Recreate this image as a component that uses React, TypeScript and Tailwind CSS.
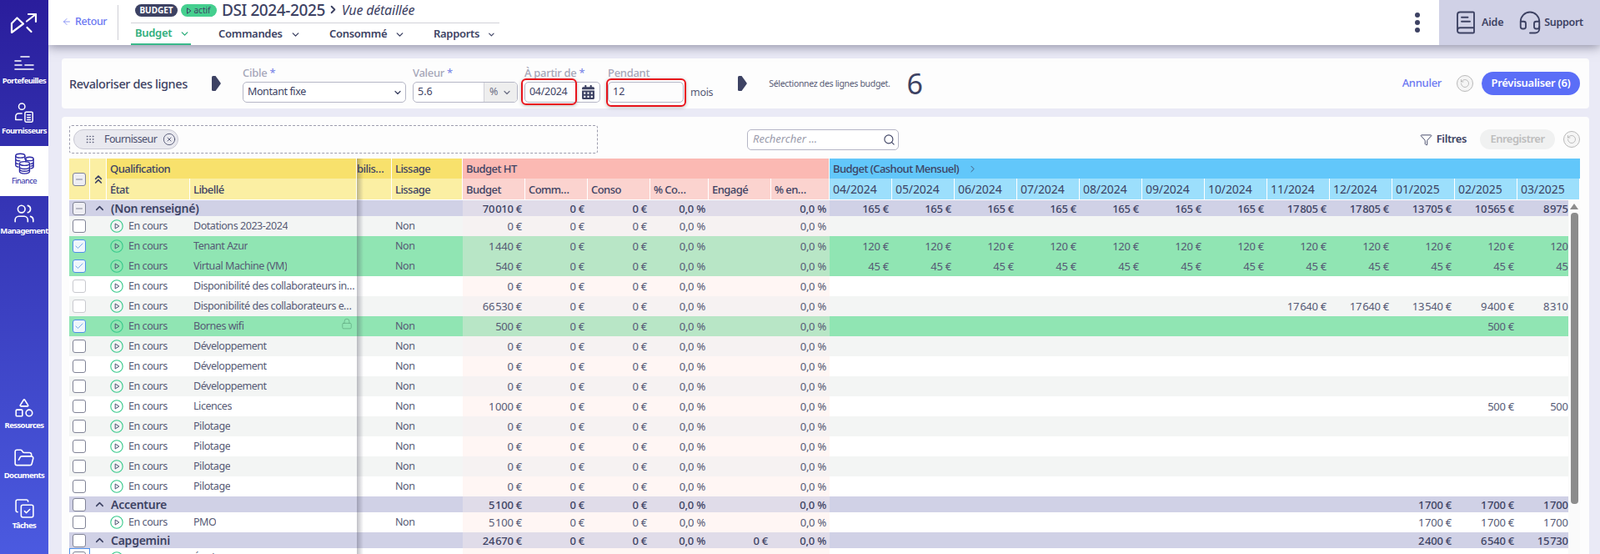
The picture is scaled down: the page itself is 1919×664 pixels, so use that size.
import React from "react";
import {
  ArrowLeft, ChevronDown, ChevronRight, ChevronUp, ChevronsUp, CircleX, Check, CopyCheck, Filter, FolderOpen, Grip, Headset, Lock, Minus, RotateCcw, Search, Shapes, Users, BookText,
} from "lucide-react";
import { FaCalendarAlt } from "react-icons/fa";

const GRID = "grid grid-cols-[25px_20px_100px_200px_42px_85px_75px_75px_75px_70px_75px_70px_repeat(12,75px)] w-[1812px]";
const n = "\u200a";

type Kind = "group" | "grey" | "white" | "green";
type Row = {
  kind: Kind;
  label: string;
  lissage?: string;
  budget: string;
  engage?: string;
  months?: Record<number, string>;
  check?: "none" | "checked" | "minus" | "disabled";
  lock?: boolean;
};

const all = (v: string) => Object.fromEntries(Array.from({ length: 12 }, (_, i) => [i, v]));

const rows: Row[] = [
  {
    kind: "group", label: "(Non renseigné)", budget: `70${n}010 €`, check: "minus",
    months: { 0: "165 €", 1: "165 €", 2: "165 €", 3: "165 €", 4: "165 €", 5: "165 €", 6: "165 €", 7: `17${n}805 €`, 8: `17${n}805 €`, 9: `13${n}705 €`, 10: `10${n}565 €`, 11: `8${n}975 €` },
  },
  { kind: "grey", label: "Dotations 2023-2024", lissage: "Non", budget: "0 €" },
  { kind: "green", label: "Tenant Azur", lissage: "Non", budget: `1${n}440 €`, check: "checked", months: all("120 €") },
  { kind: "green", label: "Virtual Machine (VM)", lissage: "Non", budget: "540 €", check: "checked", months: all("45 €") },
  { kind: "white", label: "Disponibilité des collaborateurs internes", budget: "0 €", check: "disabled" },
  {
    kind: "grey", label: "Disponibilité des collaborateurs externes", budget: `66${n}530 €`, check: "disabled",
    months: { 7: `17${n}640 €`, 8: `17${n}640 €`, 9: `13${n}540 €`, 10: `9${n}400 €`, 11: `8${n}310 €` },
  },
  { kind: "green", label: "Bornes wifi", lissage: "Non", budget: "500 €", check: "checked", lock: true, months: { 10: "500 €" } },
  { kind: "grey", label: "Développement", lissage: "Non", budget: "0 €" },
  { kind: "white", label: "Développement", lissage: "Non", budget: "0 €" },
  { kind: "grey", label: "Développement", lissage: "Non", budget: "0 €" },
  { kind: "white", label: "Licences", lissage: "Non", budget: `1${n}000 €`, months: { 10: "500 €", 11: "500 €" } },
  { kind: "grey", label: "Pilotage", lissage: "Non", budget: "0 €" },
  { kind: "white", label: "Pilotage", lissage: "Non", budget: "0 €" },
  { kind: "grey", label: "Pilotage", lissage: "Non", budget: "0 €" },
  { kind: "white", label: "Pilotage", lissage: "Non", budget: "0 €" },
  { kind: "group", label: "Accenture", budget: `5${n}100 €`, months: { 9: `1${n}700 €`, 10: `1${n}700 €`, 11: `1${n}700 €` } },
  { kind: "white", label: "PMO", lissage: "Non", budget: `5${n}100 €`, months: { 9: `1${n}700 €`, 10: `1${n}700 €`, 11: `1${n}700 €` } },
  { kind: "group", label: "Capgemini", budget: `24${n}670 €`, engage: "0 €", months: { 9: `2${n}400 €`, 10: `6${n}540 €`, 11: `15${n}730 €` } },
  { kind: "white", label: "Études", lissage: "Non", budget: "0 €" },
];

const months = ["04/2024", "05/2024", "06/2024", "07/2024", "08/2024", "09/2024", "10/2024", "11/2024", "12/2024", "01/2025", "02/2025", "03/2025"];

const sectionBg: Record<Kind, { left: string; mid: string; right: string }> = {
  group: { left: "bg-[#d0d1e6]", mid: "bg-[#e0dce9]", right: "bg-[#d0d1e6]" },
  grey: { left: "bg-[#f3f5f4]", mid: "bg-[#f6f2f2]", right: "bg-[#f3f5f4]" },
  white: { left: "bg-white", mid: "bg-[#fff6f4]", right: "bg-white" },
  green: { left: "bg-[#90e5b3]", mid: "bg-[#b8e6c6]", right: "bg-[#90e5b3]" },
};

function Box({ state = "none" }: { state?: Row["check"] }) {
  if (state === "checked")
    return (
      <span className="flex h-4 w-4 items-center justify-center rounded-[3px] border border-[#4f8fe8] bg-[#eef6fb]">
        <Check size={12} strokeWidth={1.5} className="text-[#4f8fe8]" />
      </span>
    );
  if (state === "minus")
    return (
      <span className="flex h-4 w-4 items-center justify-center rounded-[3px] border border-[#808396] bg-[#eeeef3]">
        <Minus size={12} strokeWidth={2} className="text-[#808396]" />
      </span>
    );
  if (state === "disabled") return <span className="block h-4 w-4 rounded-[3px] border border-[#c8c9ce] bg-white" />;
  return <span className="block h-4 w-4 rounded-[3px] border border-[#808396] bg-white" />;
}

function Arrow() {
  return (
    <svg width="11" height="18" viewBox="0 0 11 18" className="shrink-0">
      <path d="M0 1.5Q0 0 1.5 0H4.5L10.5 8.2Q11 9 10.5 9.8L4.5 18H1.5Q0 18 0 16.5Z" fill="#3d4263" />
    </svg>
  );
}

function Reset({ size = 20 }: { size?: number }) {
  return (
    <span className="flex shrink-0 items-center justify-center rounded-full border border-[#b9b9b9] bg-[#f5f5f5]" style={{ width: size, height: size }}>
      <RotateCcw size={size - 8} strokeWidth={1.2} className="text-[#9a9a9a]" />
    </span>
  );
}

function StatusIcon() {
  return (
    <svg width="16" height="16" viewBox="0 0 16 16" fill="none" className="shrink-0">
      <circle cx="8" cy="8" r="7.2" stroke="#36c98a" strokeWidth="1.1" />
      <path d="M6.2 5 10.8 8 6.2 11Z" stroke="#4c5070" strokeWidth="1" strokeLinejoin="round" />
    </svg>
  );
}

function SideItem({ icon, label, active }: { icon: React.ReactNode; label: string; active?: boolean }) {
  return (
    <div className={`flex h-[60px] flex-col items-center gap-px pt-2 ${active ? "bg-white text-[#2d2aa5]" : "text-white"}`}>
      <span className="flex h-[26px] items-center">{icon}</span>
      <span className={`text-[9.5px] leading-[13px] tracking-[-0.6px] ${active ? "font-normal" : "font-bold"}`}>{label}</span>
    </div>
  );
}

function Tab({ label, active, w }: { label: string; active?: boolean; w: string }) {
  return (
    <div className={`flex h-full items-center gap-[9px] pl-[5px] text-[13px] font-semibold tracking-[-0.3px] ${w} ${active ? "border-b-2 border-[#3ab98a] text-[#2fae7c]" : "text-[#3d4263]"}`}>
      {label}
      <ChevronDown size={13} strokeWidth={2.5} />
    </div>
  );
}

function Field({ label, req, children, w }: { label: string; req?: boolean; children: React.ReactNode; w: string }) {
  return (
    <div className={`flex flex-col ${w}`}>
      <span className="h-[21px] pt-px text-[13px] leading-[18px] font-medium tracking-[-0.3px] text-[#a5a6b8] whitespace-nowrap">
        {label} {req && <span className="text-[#7c88e8]">*</span>}
      </span>
      {children}
    </div>
  );
}

function TableRow({ r, last }: { r: Row; last: boolean }) {
  const c = sectionBg[r.kind];
  const isGroup = r.kind === "group";
  const txt = isGroup ? "font-medium text-[#3d4263]" : "text-[#565a75]";
  const num = `flex items-center justify-end pr-1 whitespace-nowrap overflow-hidden tracking-[-0.25px]`;
  const left = `${c.left} flex items-center`;
  const word = "text-[12.5px] tracking-[-0.45px]";
  return (
    <div className={`${GRID} ${isGroup ? "h-[19px]" : "h-6"} text-[13px] leading-[16px] ${txt}`}>
      <div className={`${left} justify-start pl-1 ${last ? "outline outline-1 -outline-offset-1 outline-[#4f8fe8] bg-white" : ""}`}>
        <Box state={r.check ?? "none"} />
      </div>
      {isGroup ? (
        <div className={`${left} col-span-3 gap-[6px] pl-[4px]`}>
          <ChevronUp size={15} strokeWidth={2.5} className="shrink-0 text-[#3d4263]" />
          <span className="text-[14px] font-semibold tracking-[-0.25px]">{r.label}</span>
        </div>
      ) : (
        <>
          <div className={left} />
          <div className={`${left} ${word} gap-[6px] pl-1`}>
            <StatusIcon />
            En cours
          </div>
          <div className={`${left} ${word} relative pl-1 pr-[2px]`}>
            <span className="truncate">{r.label}</span>
            {r.lock && <Lock size={14} strokeWidth={1.2} className="absolute right-[5px] top-[2px] text-[#5fa880]" />}
          </div>
        </>
      )}
      <div className={left} />
      <div className={`${left} ${word} pl-1`}>{r.lissage}</div>
      <div className={`${c.mid} ${num}`}>{r.budget}</div>
      <div className={`${c.mid} ${num}`}>0 €</div>
      <div className={`${c.mid} ${num}`}>0 €</div>
      <div className={`${c.mid} ${num}`}>0,0 %</div>
      <div className={`${c.mid} ${num}`}>{r.engage}</div>
      <div className={`${c.mid} ${num}`}>0,0 %</div>
      {months.map((_, i) => (
        <div key={i} className={`${c.right} ${num}`}>
          {r.months?.[i]}
        </div>
      ))}
    </div>
  );
}

export default function App() {
  const sub = "flex items-center pl-1 border-r border-white whitespace-nowrap overflow-hidden";
  return (
    <div className="flex h-[664px] w-[1919px] overflow-hidden bg-[#eaeaf6] font-['Noto_Sans_CJK_JP','Source_Sans_Pro',sans-serif] text-[#3d4263]">
      {/* Sidebar */}
      <aside className="z-30 flex w-[58px] shrink-0 flex-col justify-between bg-gradient-to-b from-[#2a1d9c] to-[#4b5ae0] pb-4">
        <div className="flex flex-col">
          <div className="flex h-[55px] items-center justify-center">
            <svg width="34" height="28" viewBox="13 11 34 28" fill="none" stroke="white" strokeWidth="2.2" strokeLinecap="round" strokeLinejoin="round">
              <path d="M15 25V36L29 25.5L21.5 18.5L15 25" />
              <path d="M33 22.5L44 14M35 14H44V23M33.5 30L38.5 35" />
            </svg>
          </div>
          <SideItem
            label="Portefeuilles"
            icon={
              <svg width="24" height="20" viewBox="0 0 24 20" fill="none" stroke="white" strokeWidth="1.6" strokeLinecap="round">
                <path d="M8 2H18M1 7H8M1 12H9M13 12H23M1 17H23" />
              </svg>
            }
          />
          <SideItem
            label="Fournisseurs"
            icon={
              <svg width="26" height="26" viewBox="0 0 26 28" fill="none" stroke="white" strokeWidth="1.6" strokeLinecap="round" strokeLinejoin="round">
                <circle cx="10" cy="5" r="4" />
                <path d="M10 14H6Q2 14 2 18V22H10" />
                <rect x="14" y="12" width="10" height="13" rx="1.5" />
                <path d="M17 16H21M17 19H21M17 22H21" />
              </svg>
            }
          />
          <SideItem
            active
            label="Finance"
            icon={
              <svg width="26" height="26" viewBox="0 0 26 28" fill="none" stroke="#2d2aa5" strokeWidth="1.5">
                <ellipse cx="8" cy="4" rx="6" ry="2.6" />
                <path d="M2 4V16C2 17.5 4 18.5 6 18.6M14 4V9M2 8C2 9.5 5 10.6 8 10.6M2 12C2 13.5 4 14.5 6 14.6" />
                <ellipse cx="20" cy="8" rx="5" ry="2.4" />
                <path d="M15 8V12M25 8V18C25 19 24 20 21 20.5M25 12C25 13 24 14 21 14.6M25 15C25 16 24 17 21 17.6" />
                <ellipse cx="13.5" cy="14" rx="6.5" ry="2.6" />
                <path d="M7 14V24C7 25.8 10 27 13.5 27S20 25.8 20 24V14M7 18C7 19.8 10 21 13.5 21S20 19.8 20 18M7 21C7 22.8 10 24 13.5 24S20 22.8 20 21" />
              </svg>
            }
          />
          <SideItem label="Management" icon={<Users size={26} strokeWidth={1.5} />} />
        </div>
        <div className="flex flex-col">
          <SideItem label="Ressources" icon={<Shapes size={26} strokeWidth={1.5} />} />
          <SideItem label="Documents" icon={<FolderOpen size={26} strokeWidth={1.5} />} />
          <SideItem label="Tâches" icon={<CopyCheck size={25} strokeWidth={1.5} />} />
        </div>
      </aside>

      <div className="flex min-w-0 flex-1 flex-col">
        {/* Header */}
        <header className="z-20 flex h-[54px] shrink-0 items-stretch bg-white shadow-[0_2px_12px_rgba(60,60,90,0.55)]">
          <div className="flex w-[83px] shrink-0 items-center pb-[2px]">
            <div className="ml-4 flex items-center gap-[4px] text-[12.5px] font-medium tracking-[-0.4px] text-[#6b78f2]">
              <ArrowLeft size={12} strokeWidth={1.5} />
              Retour
            </div>
          </div>
          <div className="my-[6px] w-px shrink-0 bg-[#cfcfd6]" />
          <div className="ml-[15px] flex w-[442px] shrink-0 flex-col">
            <div className="flex h-7 shrink-0 items-start border-b border-[#d2d2d8] pl-[5px] pt-[5px]">
              <span className="flex h-[15px] w-[51px] items-center justify-center rounded-full bg-[#3d4263] text-[10px] font-bold text-white">BUDGET</span>
              <span className="ml-1 flex h-[15px] w-[43px] items-center justify-center gap-[2px] rounded-full bg-[#45cf8f] text-[10px] text-[#3d4263]">
                <svg width="6" height="8" viewBox="0 0 6 8" fill="none" stroke="#3d4263"><path d="M.5.8 5 4 .5 7.2Z" /></svg>
                actif
              </span>
              <span className="ml-[6px] -mt-[5px] text-[19px] leading-[24px] font-medium tracking-[-0.4px] whitespace-nowrap">DSI 2024-2025</span>
              <ChevronRight size={15} strokeWidth={3} className="ml-[2px] -mt-[1px] shrink-0" />
              <span className="ml-[3px] -mt-[4px] text-[16px] leading-[22px] italic tracking-[-0.2px] whitespace-nowrap">Vue détaillée</span>
            </div>
            <div className="flex h-[26px] items-stretch">
              <Tab label="Budget" active w="w-[72px]" />
              <div className="w-[28px]" />
              <Tab label="Commandes" w="w-[133px]" />
              <Tab label="Consommé" w="w-[125px]" />
              <Tab label="Rapports" w="w-[80px]" />
            </div>
          </div>
          <div className="flex flex-1 items-center justify-end pr-[23px]">
            <div className="flex flex-col gap-[3px]">
              <span className="h-[6px] w-[6px] rounded-full bg-[#3d4263]" />
              <span className="h-[6px] w-[6px] rounded-full bg-[#3d4263]" />
              <span className="h-[6px] w-[6px] rounded-full bg-[#3d4263]" />
            </div>
          </div>
          <div className="flex w-[193px] shrink-0 items-center bg-[#d0d1e6] pl-[20px] text-[12.5px] font-semibold tracking-[-0.2px]">
            <BookText size={30} strokeWidth={1.5} className="-ml-[3px]" />
            <span className="ml-[4px]">Aide</span>
            <Headset size={30} strokeWidth={1.5} className="ml-[17px]" />
            <span className="ml-[2px] tracking-[-0.3px]">Support</span>
          </div>
        </header>

        {/* Revaloriser panel */}
        <section className="ml-4 mr-[13px] mt-4 flex h-[60px] shrink-0 items-start rounded-[4px] bg-[#fdfdfd] pl-[9px] pr-[11px]">
          <span className="mt-[19px] w-[171px] shrink-0 text-[14.5px] leading-[22px] font-medium tracking-[-0.4px] whitespace-nowrap">Revaloriser des lignes</span>
          <div className="mt-[21px]"><Arrow /></div>
          <div className="ml-[26px] mt-[7px] flex items-start">
            <Field label="Cible" req w="w-[204px]">
              <div className="flex h-[25px] w-[196px] items-center justify-between rounded-[5px] border border-[#b5b6c6] bg-white pl-[5px] pr-[3px] text-[12.5px] tracking-[-0.4px]">
                Montant fixe
                <ChevronDown size={12} strokeWidth={2.5} />
              </div>
            </Field>
            <Field label="Valeur" req w="w-[134px]">
              <div className="flex h-[25px] w-[126px] items-stretch overflow-hidden rounded-[5px] border border-[#b5b6c6] bg-white text-[12.5px]">
                <span className="flex w-[85px] items-center border-r border-[#d0d0d8] pl-[5px]">5.6</span>
                <span className="flex flex-1 items-center justify-between bg-[#eeeeee] px-[6px] text-[#6e7186]">
                  %
                  <ChevronDown size={12} strokeWidth={2.5} />
                </span>
              </div>
            </Field>
            <Field label="À partir de" req w="w-[100px]">
              <div className="flex h-[25px] w-[91px] items-stretch">
                <div className="relative flex w-[63px] items-center rounded-l-[5px] border border-[#b5b6c6] pl-[5px] text-[12.5px] tracking-[-0.3px]">
                  04/2024
                  <span className="absolute -left-[5px] -top-[5px] bottom-[-4px] right-[-1px] rounded-[6px] border-2 border-[#e8141c] shadow-[0_1px_4px_rgba(0,0,0,0.25)]" />
                </div>
                <span className="flex flex-1 items-center justify-center rounded-r-[5px] border border-l-0 border-[#b5b6c6] bg-white">
                  <FaCalendarAlt size={17} className="text-[#3d4263]" />
                </span>
              </div>
            </Field>
            <Field label="Pendant" w="w-[99px]">
              <div className="relative flex h-[25px] w-[91px] items-center rounded-[5px] border border-[#b5b6c6] pl-[5px] text-[12.5px]">
                12
                <span className="absolute -left-[3px] -top-[5px] bottom-[-6px] right-[-4px] rounded-[6px] border-2 border-[#e8141c] shadow-[0_1px_4px_rgba(0,0,0,0.25)]" />
              </div>
            </Field>
            <span className="mt-[24px] text-[12.5px] leading-[20px] tracking-[-0.3px] text-[#565a75]">mois</span>
          </div>
          <div className="ml-[30px] mt-[21px]"><Arrow /></div>
          <span className="ml-[26px] mt-[22px] text-[10.5px] leading-4 tracking-[-0.32px] whitespace-nowrap text-[#565a75]">Sélectionnez des lignes budget.</span>
          <span className="ml-[20px] mt-[6px] text-[34px] leading-[48px] font-normal">6</span>
          <div className="ml-auto mt-4 flex items-center">
            <span className="text-[13px] font-medium tracking-[-0.3px] text-[#6b78f2]">Annuler</span>
            <span className="ml-[18px]"><Reset /></span>
            <span className="ml-[10px] flex h-7 w-[118px] items-center justify-center rounded-full bg-[#5b6ef7] text-[13px] font-semibold tracking-[-0.3px] whitespace-nowrap text-white">Prévisualiser (6)</span>
          </div>
        </section>

        {/* Table panel */}
        <section className="relative ml-4 mr-[13px] mt-[10px] flex min-h-0 flex-1 flex-col rounded-t-[4px] bg-[#fdfdfd] pl-[9px] pr-[11px] pt-[10px]">
          <div className="flex h-[34px] shrink-0 items-center">
            <div className="flex h-[34px] w-[634px] shrink-0 items-center rounded-[3px] border border-dashed border-[#9d9dae] pl-1">
              <div className="flex h-6 w-[126px] items-center rounded-full border border-[#c9c9d4] bg-[#e9e9ef] pl-[13px] text-[12.5px] tracking-[-0.6px]">
                <Grip size={12} strokeWidth={1.5} className="text-[#565a75]" />
                <span className="ml-[11px] text-[#4c5070]">Fournisseur</span>
                <CircleX size={16} strokeWidth={1.2} className="ml-[7px]" />
              </div>
            </div>
            <div className="ml-[179px] flex h-[25px] w-[182px] items-center justify-between rounded-[5px] border border-[#b5b6c6] bg-white pl-[6px] pr-[3px] text-[13px] italic text-[#9a9bab]">
              Rechercher ...
              <Search size={15} strokeWidth={1.8} className="text-[#3d4263]" />
            </div>
            <div className="ml-auto flex items-center">
              <Filter size={15} strokeWidth={1.5} />
              <span className="ml-[5px] text-[13px] font-semibold tracking-[-0.4px]">Filtres</span>
              <span className="ml-4 flex h-6 w-[90px] items-center justify-center rounded-full bg-[#f0f1f1] text-[13px] font-semibold tracking-[-0.5px] text-[#bdbdbd]">Enregistrer</span>
              <span className="ml-[10px]"><Reset /></span>
            </div>
          </div>

          {/* Table head */}
          <div className={`${GRID} mt-[6px] shrink-0 grid-rows-[24px_25px] border-b border-white text-[13px] font-medium leading-[18px] tracking-[-0.55px]`}>
            <div className="row-span-2 flex items-center border-r border-white bg-[#fbefa3] pl-1"><Box state="minus" /></div>
            <div className="row-span-2 flex items-center justify-center border-r border-white bg-[#fbefa3]"><ChevronsUp size={16} strokeWidth={2.5} /></div>
            <div className={`${sub} col-span-2 bg-[#f8e16c]`}>Qualification</div>
            <div className={`${sub} bg-[#f8e16c] !pl-0`}>bilis…</div>
            <div className={`${sub} bg-[#f8e16c]`}>Lissage</div>
            <div className={`${sub} col-span-6 bg-[#fbb9b3]`}>Budget HT</div>
            <div className={`${sub} col-span-12 gap-[10px] border-r-0 bg-[#62c7fa]`}>
              Budget (Cashout Mensuel)
              <ChevronRight size={13} strokeWidth={1.5} />
            </div>
            <div className={`${sub} bg-[#fbefa3]`}>État</div>
            <div className={`${sub} bg-[#fbefa3]`}>Libellé</div>
            <div className={`${sub} bg-[#fbefa3]`} />
            <div className={`${sub} bg-[#fbefa3]`}>Lissage</div>
            {["Budget", "Comm…", "Conso", "% Co…", "Engagé", "% en…"].map((h) => (
              <div key={h} className={`${sub} bg-[#fbd3cf]`}>{h}</div>
            ))}
            {months.map((m) => (
              <div key={m} className={`${sub} bg-[#9cdffc] text-[14px] font-normal tracking-[-0.1px]`}>{m}</div>
            ))}
          </div>

          {/* Body */}
          <div className="flex min-h-0 flex-1">
            <div className="min-w-0 flex-1 overflow-hidden">
              {rows.map((r, i) => (
                <TableRow key={i} r={r} last={i === rows.length - 1} />
              ))}
            </div>
            <div className="flex w-[14px] shrink-0 flex-col items-center bg-[#fafafa] pt-[4px]">
              <span className="h-0 w-0 border-x-[5px] border-b-[7px] border-x-transparent border-b-[#8c8c8c]" />
              <span className="mt-[4px] ml-[1px] h-[349px] w-[9px] rounded-[4px] bg-[#8c8c8c]" />
            </div>
          </div>

          {/* Frozen column shadow */}
          <div className="pointer-events-none absolute bottom-0 left-[354px] top-[50px] w-[8px] bg-gradient-to-r from-[rgba(60,60,80,0.32)] to-transparent" />
        </section>
      </div>
    </div>
  );
}
